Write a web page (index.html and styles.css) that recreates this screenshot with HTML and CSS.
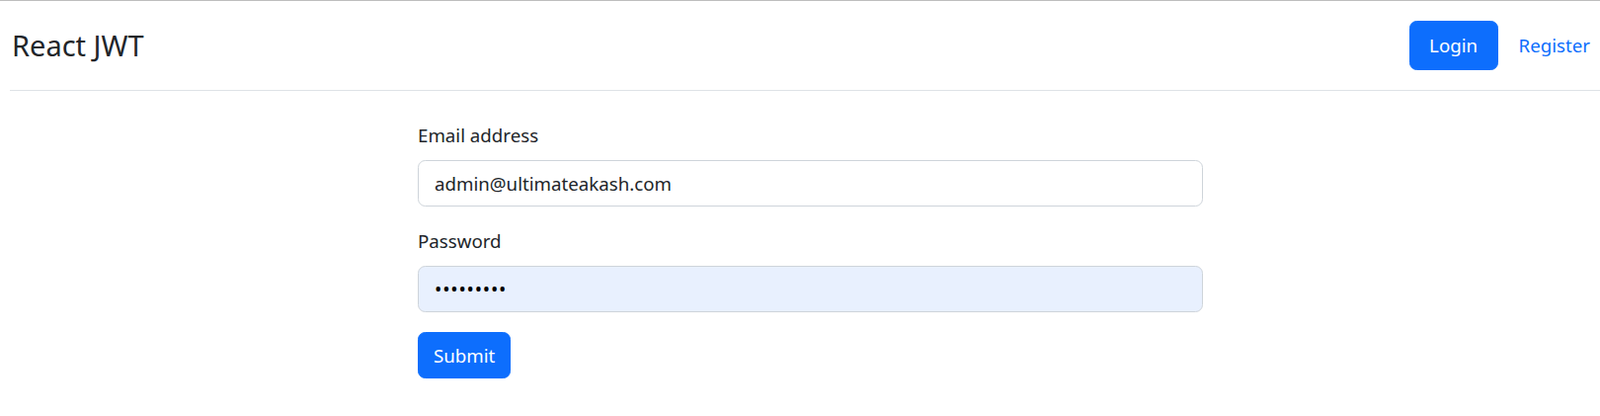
FILE: index.html
```html
<!DOCTYPE html>
<html lang="en">
<head>
<meta charset="utf-8">
<title>React JWT</title>
<link rel="stylesheet" href="styles.css">
</head>
<body>
<div class="page">
  <header class="navbar">
    <a class="brand" href="#">React JWT</a>
    <nav class="nav">
      <a class="btn btn-primary nav-login" href="#">Login</a>
      <a class="nav-link" href="#">Register</a>
    </nav>
  </header>
  <main class="content">
    <form class="login-form">
      <div class="field">
        <label class="form-label" for="email">Email address</label>
        <input class="form-control" id="email" type="email" value="admin@ultimateakash.com">
      </div>
      <div class="field">
        <label class="form-label" for="password">Password</label>
        <input class="form-control autofilled" id="password" type="password" value="123456789">
      </div>
      <button class="btn btn-primary" type="button">Submit</button>
    </form>
  </main>
</div>
</body>
</html>
```
FILE: styles.css
```css
* { box-sizing: border-box; }
html, body { margin: 0; padding: 0; }
body {
  font-family: "Noto Sans", "Open Sans", sans-serif;
  font-size: 18.7px;
  line-height: 30px;
  color: #212529;
  background: #fff;
  border-top: 1px solid #bdbdbd;
}
.navbar {
  margin-left: 10px;
  padding: 0 10px 0 2px;
  height: 91px;
  border-bottom: 1px solid #dee2e6;
  display: flex;
  align-items: center;
  justify-content: space-between;
}
.brand {
  font-size: 29px;
  line-height: 36px;
  color: #212529;
  text-decoration: none;
}
.nav {
  display: flex;
  align-items: center;
  gap: 21px;
}
.nav-link {
  color: #0d6efd;
  text-decoration: none;
}
.btn {
  display: inline-block;
  font-family: inherit;
  font-size: 18.7px;
  line-height: 30px;
  padding: 7.5px 15px;
  border: 1px solid transparent;
  border-radius: 7.5px;
  text-decoration: none;
  cursor: pointer;
}
.btn-primary {
  background: #0d6efd;
  border-color: #0d6efd;
  color: #fff;
}
.nav-login { padding: 9px 19.5px; }
.content {
  padding: 30px 0 0 423px;
}
.login-form {
  width: 795px;
}
.field { margin-bottom: 20px; }
.form-label {
  display: block;
  margin-bottom: 10px;
}
.form-control {
  display: block;
  width: 100%;
  height: 47px;
  font-family: inherit;
  font-size: 18.7px;
  color: #212529;
  padding: 0 16px;
  border: 1px solid #ced4da;
  border-radius: 7.5px;
  background: #fff;
  outline: none;
}
.autofilled {
  background: #e8f0fe;
  color: #000;
  letter-spacing: 0.8px;
  font-size: 19.5px;
}
```
